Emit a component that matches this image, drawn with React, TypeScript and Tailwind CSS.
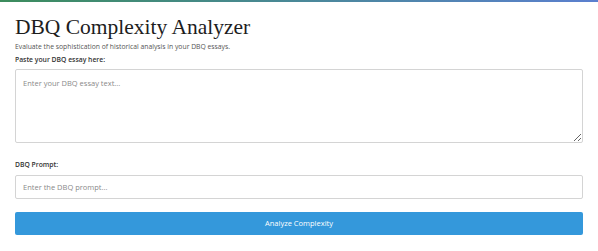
import React, { useState } from 'react';

export default function App() {
  const [essay, setEssay] = useState('');
  const [prompt, setPrompt] = useState('');

  return (
    <div className="min-h-screen bg-white font-['Open_Sans','Noto_Sans',sans-serif]">
      {/* Top accent bar */}
      <div className="h-[2px] bg-gradient-to-r from-[#3c8c5c] to-[#5b7fcf]" />

      <div className="px-[15px] pt-[13px]">
        {/* Header */}
        <h1 className="font-['Liberation_Serif',serif] text-[21.5px] leading-[24px] text-[#1d1d1d]">
          DBQ Complexity Analyzer
        </h1>
        <p className="mt-[3px] text-[6.8px] leading-[10px] text-[#555]">
          Evaluate the sophistication of historical analysis in your DBQ essays.
        </p>

        {/* Essay input */}
        <label className="mt-[3px] block text-[6.8px] leading-[10px] font-semibold text-[#333]">
          Paste your DBQ essay here:
        </label>
        <textarea
          value={essay}
          onChange={(e) => setEssay(e.target.value)}
          placeholder="Enter your DBQ essay text..."
          className="mt-[4px] block h-[74px] w-[568px] rounded-[2px] border border-[#d4d4d4] px-[7px] py-[8px] text-[7.5px] leading-[11px] text-[#333] placeholder:text-[#8a8a8a] outline-none"
        />

        {/* Prompt input */}
        <label className="mt-[17px] block text-[6.8px] leading-[10px] font-semibold text-[#333]">
          DBQ Prompt:
        </label>
        <input
          type="text"
          value={prompt}
          onChange={(e) => setPrompt(e.target.value)}
          placeholder="Enter the DBQ prompt..."
          className="mt-[5px] block h-[24px] w-[568px] rounded-[2px] border border-[#d4d4d4] px-[7px] text-[7.5px] text-[#333] placeholder:text-[#8a8a8a] outline-none"
        />

        <button className="mt-[13px] block h-[23px] w-[568px] rounded-[2px] bg-[#3498db] text-[7.5px] font-medium text-white">
          Analyze Complexity
        </button>
      </div>
    </div>
  );
}
